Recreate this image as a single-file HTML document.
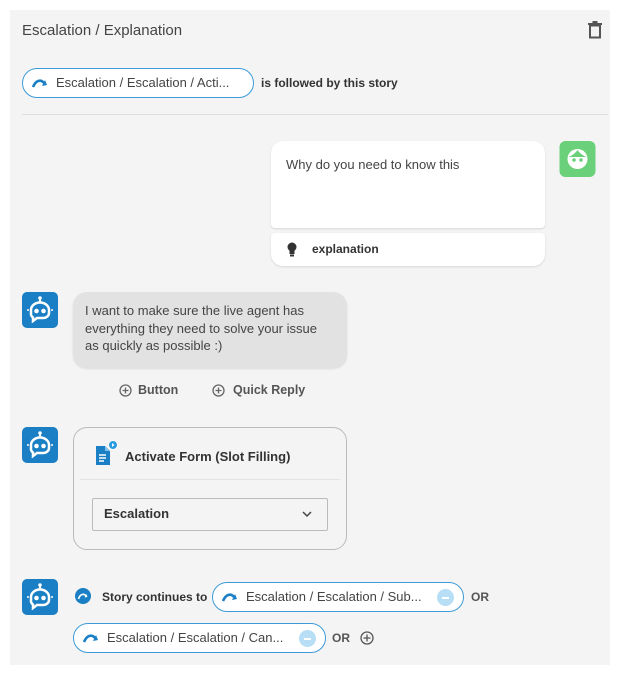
<!DOCTYPE html>
<html><head><meta charset="utf-8"><style>
*{margin:0;padding:0;box-sizing:border-box}
body{width:620px;height:676px;background:#fff;font-family:"Liberation Sans",sans-serif;color:#333;position:relative;overflow:hidden}
.panel{position:absolute;left:10px;top:10px;width:600px;height:655px;background:#f4f4f4}
.a{position:absolute}
.chip{position:absolute;height:30px;border:1.5px solid #3d9bd8;border-radius:15px;background:#fff;font-size:13px;color:#444;line-height:27px;padding-left:33px;white-space:nowrap}
.chip svg.arr{position:absolute;left:9px;top:9px}
.minus{position:absolute;top:6px;width:17px;height:17px;border-radius:50%;background:#b8def6}
.minus:after{content:"";position:absolute;left:5px;top:8px;width:7px;height:1.5px;background:#fff}
.b{font-weight:bold;font-size:12px;color:#333}
</style></head><body>
<div class="panel"></div>
<svg width="0" height="0" style="position:absolute"><defs>
<symbol id="bot" viewBox="0 0 36 36"><rect width="36" height="36" rx="5" fill="#1a7fc5"/><line x1="18" y1="6" x2="18" y2="10" stroke="#fff" stroke-width="2"/><circle cx="18" cy="6" r="1.8" fill="#fff"/><path d="M9 18a9 7.5 0 0 1 18 0v3a6 5 0 0 1-6 5h-6l-4 3v-3.5a6 5 0 0 1-2-4.5z" fill="none" stroke="#fff" stroke-width="2.5"/><circle cx="14.5" cy="19" r="2.3" fill="#fff"/><circle cx="21.5" cy="19" r="2.3" fill="#fff"/><line x1="5" y1="18" x2="7" y2="18" stroke="#fff" stroke-width="1.5"/><line x1="29" y1="18" x2="31" y2="18" stroke="#fff" stroke-width="1.5"/></symbol>
<symbol id="arr" viewBox="0 0 16 10"><path d="M1 9C4 2 9 1 12 5" fill="none" stroke="#1a7fc5" stroke-width="2.6"/><path d="M10 8l5-1-2-5z" fill="#1a7fc5"/></symbol>
</defs></svg>

<div class="a" style="left:22px;top:22px;font-size:15px;color:#444">Escalation / Explanation</div>
<svg class="a" style="left:588px;top:21px" width="14" height="18" viewBox="0 0 14 18"><rect x="2" y="4.5" width="10" height="12" fill="none" stroke="#555" stroke-width="2"/><rect x="0" y="2" width="14" height="2" fill="#555"/><rect x="4.5" y="0" width="5" height="2" fill="#555"/></svg>

<div class="chip" style="left:22px;top:68px;width:232px"><svg class="arr" width="16" height="10"><use href="#arr"/></svg>Escalation / Escalation / Acti...</div>
<div class="a b" style="left:261px;top:76px">is followed by this story</div>
<div class="a" style="left:22px;top:114px;width:586px;height:1px;background:#ddd"></div>

<div class="a" style="left:271px;top:141px;width:274px;height:87px;background:#fff;border-radius:12px 12px 4px 4px;box-shadow:0 1px 2px rgba(0,0,0,.12)"></div>
<div class="a" style="left:286px;top:157px;font-size:13px;color:#444">Why do you need to know this</div>
<div class="a" style="left:271px;top:233px;width:274px;height:33px;background:#fff;border-radius:4px 4px 12px 12px;box-shadow:0 1px 2px rgba(0,0,0,.12)"></div>
<svg class="a" style="left:287px;top:242px" width="10" height="15" viewBox="0 0 10 15"><circle cx="5" cy="5" r="4.5" fill="#333"/><rect x="2.5" y="7" width="5" height="5" fill="#333"/><rect x="3" y="12.5" width="4" height="2" fill="#333"/></svg>
<div class="a b" style="left:312px;top:242px">explanation</div>
<svg class="a" style="left:559px;top:141px" width="37" height="36" viewBox="0 0 36 36"><rect width="36" height="36" rx="6" fill="#6bd07a"/><circle cx="18" cy="18" r="10" fill="#fff"/><path d="M9 16c3-1 7-4 9-7 2 3 6 6 9 7" fill="#6bd07a"/><circle cx="14.5" cy="19" r="1.8" fill="#6bd07a"/><circle cx="21.5" cy="19" r="1.8" fill="#6bd07a"/></svg>

<svg class="a" style="left:22px;top:292px" width="36" height="36"><use href="#bot"/></svg>
<div class="a" style="left:73px;top:292px;width:274px;height:76px;background:#e2e2e2;border-radius:14px;box-shadow:0 1px 2px rgba(0,0,0,.1)"></div>
<div class="a" style="left:85px;top:302px;font-size:13px;line-height:17.5px;color:#444;width:240px">I want to make sure the live agent has everything they need to solve your issue as quickly as possible :)</div>
<svg class="a" style="left:119px;top:384px" width="13" height="13" viewBox="0 0 13 13"><circle cx="6.5" cy="6.5" r="5.5" fill="none" stroke="#666" stroke-width="1.3"/><path d="M6.5 3.5v6M3.5 6.5h6" stroke="#666" stroke-width="1.3"/></svg>
<div class="a b" style="left:138px;top:383px;font-size:12.5px;color:#555">Button</div>
<svg class="a" style="left:212px;top:384px" width="13" height="13" viewBox="0 0 13 13"><circle cx="6.5" cy="6.5" r="5.5" fill="none" stroke="#666" stroke-width="1.3"/><path d="M6.5 3.5v6M3.5 6.5h6" stroke="#666" stroke-width="1.3"/></svg>
<div class="a b" style="left:233px;top:383px;font-size:12.5px;color:#555">Quick Reply</div>

<svg class="a" style="left:22px;top:427px" width="36" height="36"><use href="#bot"/></svg>
<div class="a" style="left:73px;top:427px;width:274px;height:123px;border:1px solid #bbb;border-radius:14px"></div>
<svg class="a" style="left:95px;top:440px" width="24" height="26" viewBox="0 0 24 26"><path d="M1 6h9l5 5v14H1z" fill="#1a7fc5"/><path d="M10 6v5h5" fill="#7cc0ec"/><path d="M4 15h7M4 18h7M4 21h5" stroke="#fff" stroke-width="1.4"/><circle cx="18" cy="5" r="5" fill="#fff"/><circle cx="18" cy="5" r="4" fill="#2a9be0"/><path d="M17 3l2.5 2-2.5 2z" fill="#fff"/></svg>
<div class="a b" style="left:125px;top:449px;font-size:13px">Activate Form (Slot Filling)</div>
<div class="a" style="left:80px;top:479px;width:260px;height:1px;background:#e3e3e3"></div>
<div class="a" style="left:92px;top:498px;width:236px;height:33px;border:1px solid #bbb;border-radius:2px;background:#f4f4f4"></div>
<div class="a b" style="left:104px;top:506px;font-size:13px">Escalation</div>
<svg class="a" style="left:302px;top:511px" width="10" height="7" viewBox="0 0 10 7"><path d="M1 1l4 4 4-4" fill="none" stroke="#444" stroke-width="1.5"/></svg>

<svg class="a" style="left:22px;top:579px" width="36" height="36"><use href="#bot"/></svg>
<svg class="a" style="left:75px;top:588px" width="16" height="16" viewBox="0 0 16 16"><circle cx="8" cy="8" r="8" fill="#1a7fc5"/><path d="M3.5 11C5 6 9 5 11 8" fill="none" stroke="#fff" stroke-width="1.6"/><path d="M9.5 9.5l3-.5-1-3z" fill="#fff"/></svg>
<div class="a b" style="left:102px;top:590px">Story continues to</div>
<div class="chip" style="left:212px;top:582px;width:252px"><svg class="arr" width="16" height="10"><use href="#arr"/></svg>Escalation / Escalation / Sub...<span class="minus" style="left:224px"></span></div>
<div class="a b" style="left:471px;top:590px;color:#555">OR</div>
<div class="chip" style="left:73px;top:623px;width:253px"><svg class="arr" width="16" height="10"><use href="#arr"/></svg>Escalation / Escalation / Can...<span class="minus" style="left:225px"></span></div>
<div class="a b" style="left:332px;top:631px;color:#555">OR</div>
<svg class="a" style="left:360px;top:631px" width="14" height="14" viewBox="0 0 14 14"><circle cx="7" cy="7" r="6" fill="none" stroke="#555" stroke-width="1.3"/><path d="M7 3.5v7M3.5 7h7" stroke="#555" stroke-width="1.3"/></svg>
</body></html>
